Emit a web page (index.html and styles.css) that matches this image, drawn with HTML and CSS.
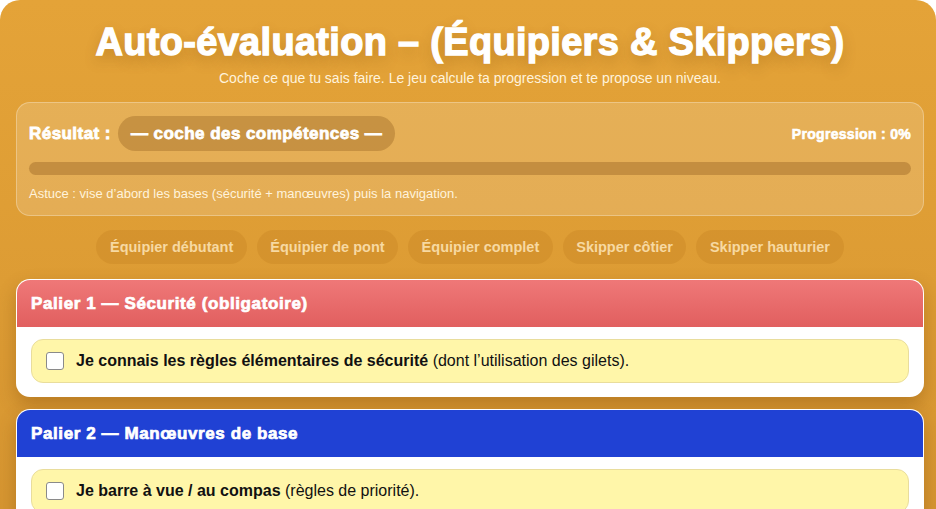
FILE: index.html
```html
<!DOCTYPE html>
<html lang="fr">
<head>
<meta charset="utf-8">
<title>Auto-évaluation</title>
<link rel="stylesheet" href="styles.css">
</head>
<body>
<div class="app">
  <header class="hero">
    <h1 class="hero-title">Auto-évaluation – (Équipiers &amp; Skippers)</h1>
    <p class="hero-sub">Coche ce que tu sais faire. Le jeu calcule ta progression et te propose un niveau.</p>
  </header>

  <section class="result">
    <div class="result-top">
      <div class="result-label">Résultat : <span class="pill">— coche des compétences —</span></div>
      <div class="prog">Progression : 0%</div>
    </div>
    <div class="bar"><div class="bar-fill" style="width:0%"></div></div>
    <p class="tip">Astuce : vise d’abord les bases (sécurité + manœuvres) puis la navigation.</p>
  </section>

  <nav class="levels">
    <span class="chip">Équipier débutant</span>
    <span class="chip">Équipier de pont</span>
    <span class="chip">Équipier complet</span>
    <span class="chip">Skipper côtier</span>
    <span class="chip">Skipper hauturier</span>
  </nav>

  <section class="card card-red">
    <h2 class="card-head">Palier 1 — Sécurité (obligatoire)</h2>
    <div class="card-body">
      <label class="item"><span class="box"></span><span class="item-text"><b>Je connais les règles élémentaires de sécurité</b> (dont l’utilisation des gilets).</span></label>
    </div>
  </section>

  <section class="card card-blue">
    <h2 class="card-head">Palier 2 — Manœuvres de base</h2>
    <div class="card-body">
      <label class="item"><span class="box"></span><span class="item-text"><b>Je barre à vue / au compas</b> (règles de priorité).</span></label>
      <label class="item"><span class="box"></span><span class="item-text"><b>Je sais border et choquer les écoutes</b> (réglage des voiles).</span></label>
    </div>
  </section>
</div>
</body>
</html>
```

FILE: styles.css
```css
html, body {
  margin: 0;
  padding: 0;
  background: #ffffff;
}
body {
  font-family: "Liberation Sans", Arial, sans-serif;
  color: #111;
}
.app {
  border-radius: 20px 20px 0 0;
  background: linear-gradient(180deg, #e4a338 0%, #dd9c34 45%, #d2922f 100%);
  padding: 20px 12px 40px 16px;
  min-height: 600px;
  box-sizing: border-box;
}
.hero {
  text-align: center;
}
.hero-title {
  margin: 0;
  font-size: 38px;
  line-height: 44px;
  font-weight: 700;
  color: #fff;
  -webkit-text-stroke: 1.3px #fff;
  letter-spacing: 0.3px;
  text-shadow: 0 6px 14px rgba(120, 70, 0, 0.32);
}
.hero-sub {
  margin: 6px 0 0;
  font-size: 14px;
  line-height: 17px;
  color: #fff3dc;
}
.result {
  margin-top: 15px;
  border: 1px solid rgba(255, 255, 255, 0.28);
  border-radius: 14px;
  background: rgba(255, 255, 255, 0.16);
  padding: 13px 12px 13px 12px;
}
.result-top {
  display: flex;
  align-items: center;
  justify-content: space-between;
}
.result-label {
  display: flex;
  align-items: center;
  gap: 7px;
  font-size: 17px;
  font-weight: 700;
  letter-spacing: 0.45px;
  color: #fff;
  -webkit-text-stroke: 0.8px #fff;
}
.pill {
  display: inline-flex;
  align-items: center;
  height: 35px;
  padding: 0 13px;
  border-radius: 18px;
  background: rgba(130, 80, 20, 0.3);
  font-size: 17px;
  color: #fff;
}
.prog {
  font-size: 14px;
  font-weight: 700;
  letter-spacing: 0.3px;
  color: #fff;
  -webkit-text-stroke: 0.6px #fff;
}
.bar {
  margin-top: 11px;
  height: 13px;
  border-radius: 7px;
  background: rgba(130, 80, 20, 0.33);
  overflow: hidden;
}
.bar-fill {
  height: 100%;
  background: #2f9e44;
}
.tip {
  margin: 11px 0 0;
  font-size: 13px;
  line-height: 16px;
  color: #fff3dc;
}
.levels {
  display: flex;
  justify-content: center;
  gap: 10px;
  margin: 14px 0 15px;
}
.chip {
  display: inline-flex;
  align-items: center;
  height: 34px;
  padding: 0 13.5px;
  border-radius: 17px;
  background: rgba(160, 90, 10, 0.14);
  color: #f7d9a2;
  font-size: 14.5px;
  font-weight: 700;
}
.card {
  border: 1px solid rgba(255, 255, 255, 0.9);
  border-radius: 14px;
  overflow: hidden;
  background: #fff;
  box-shadow: 0 8px 18px rgba(110, 60, 0, 0.3);
  margin-bottom: 12px;
}
.card-head {
  margin: 0;
  height: 47px;
  display: flex;
  align-items: center;
  padding: 0 14px;
  font-size: 17px;
  font-weight: 700;
  letter-spacing: 0.6px;
  color: #fff;
  -webkit-text-stroke: 0.7px #fff;
}
.card-red .card-head {
  background: linear-gradient(180deg, #ef7878 0%, #e15f5f 100%);
}
.card-blue .card-head {
  background: #2041d4;
}
.card-body {
  padding: 12px 14px 13px;
  display: flex;
  flex-direction: column;
  gap: 10px;
}
.item {
  display: flex;
  align-items: center;
  gap: 12px;
  min-height: 42px;
  padding: 0 14px;
  border: 1px solid #e9dd9c;
  border-radius: 12px;
  background: #fff6a9;
  font-size: 16px;
  color: #111;
}
.box {
  flex: none;
  width: 16px;
  height: 16px;
  border: 1px solid #8a8a8a;
  border-radius: 3px;
  background: #fff;
}
.item-text b {
  font-weight: 700;
}
```
